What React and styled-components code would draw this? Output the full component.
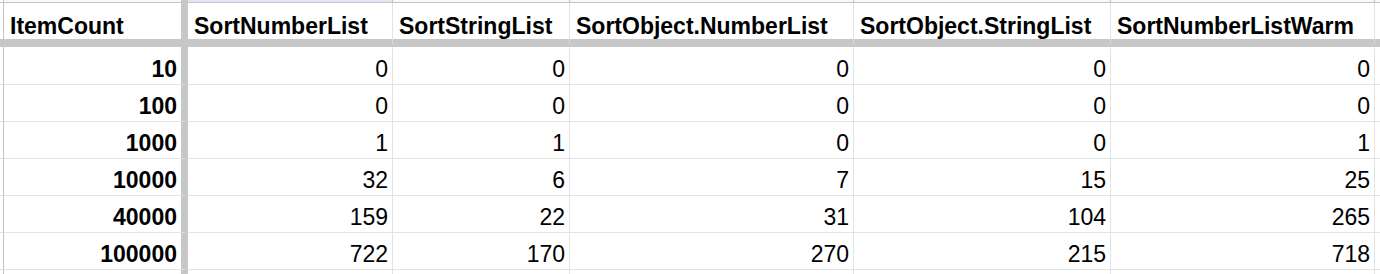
import React from "react";
import styled, { createGlobalStyle } from "styled-components";

const GlobalStyle = createGlobalStyle`
  body {
    margin: 0;
    background: #ffffff;
    font-family: "Liberation Sans", Arial, sans-serif;
  }
`;

const Sheet = styled.div`
  display: grid;
  grid-template-columns: 4px 184px 205px 177px 284px 257px 264px 1fr;
  width: 1380px;
  height: 274px;
  overflow: hidden;
  background: #ffffff;
  color: #000000;
`;

const Edge = styled.div`
  border-right: 1px solid #c4c4c4;
  border-bottom: ${(p) =>
    p.$head ? "8px solid #c7c7c7" : p.$top ? "1px solid #c4c4c4" : "1px solid #e2e3e3"};
  height: ${(p) => p.$h}px;
  box-sizing: border-box;
`;

const ColHead = styled.div`
  height: 3px;
  box-sizing: border-box;
  background: ${(p) => (p.$selected ? "#e1e6f7" : "#f8f9fa")};
  border-bottom: 1px solid #c4c4c4;
  border-right: ${(p) => (p.$frozen ? "7px solid #c7c7c7" : "1px solid #c4c4c4")};
`;

const Cell = styled.div`
  display: flex;
  align-items: flex-end;
  justify-content: ${(p) => (p.$right ? "flex-end" : "flex-start")};
  box-sizing: border-box;
  height: ${(p) => p.$h}px;
  padding: 0 4px ${(p) => (p.$head ? 1 : 3)}px 6px;
  font-size: 23px;
  line-height: 23px;
  font-weight: ${(p) => (p.$bold ? 700 : 400)};
  white-space: nowrap;
  overflow: hidden;
  border-right: ${(p) => (p.$frozen ? "7px solid #c7c7c7" : "1px solid #e2e3e3")};
  border-bottom: ${(p) => (p.$head ? "8px solid #c7c7c7" : "1px solid #e2e3e3")};
`;

const headers = [
  "ItemCount",
  "SortNumberList",
  "SortStringList",
  "SortObject.NumberList",
  "SortObject.StringList",
  "SortNumberListWarm",
  "",
];

const rows = [
  [10, 0, 0, 0, 0, 0],
  [100, 0, 0, 0, 0, 0],
  [1000, 1, 1, 0, 0, 1],
  [10000, 32, 6, 7, 15, 25],
  [40000, 159, 22, 31, 104, 265],
  [100000, 722, 170, 270, 215, 718],
  ["", "", "", "", "", ""],
];

const rowHeight = (i) => (i === 0 ? 38 : 37);

export default function App() {
  return (
    <>
      <GlobalStyle />
      <Sheet>
        <Edge $top $h={3} />
        {headers.map((h, i) => (
          <ColHead key={i} $frozen={i === 0} $selected={i === 1} />
        ))}

        <Edge $head $h={44} />
        {headers.map((h, i) => (
          <Cell key={i} $head $bold $frozen={i === 0} $h={44}>
            {h}
          </Cell>
        ))}

        {rows.map((r, ri) => (
          <React.Fragment key={ri}>
            <Edge $h={rowHeight(ri)} />
            {r.map((v, ci) => (
              <Cell
                key={ci}
                $right
                $bold={ci === 0}
                $frozen={ci === 0}
                $h={rowHeight(ri)}
              >
                {v}
              </Cell>
            ))}
            <Cell $h={rowHeight(ri)} />
          </React.Fragment>
        ))}
      </Sheet>
    </>
  );
}
